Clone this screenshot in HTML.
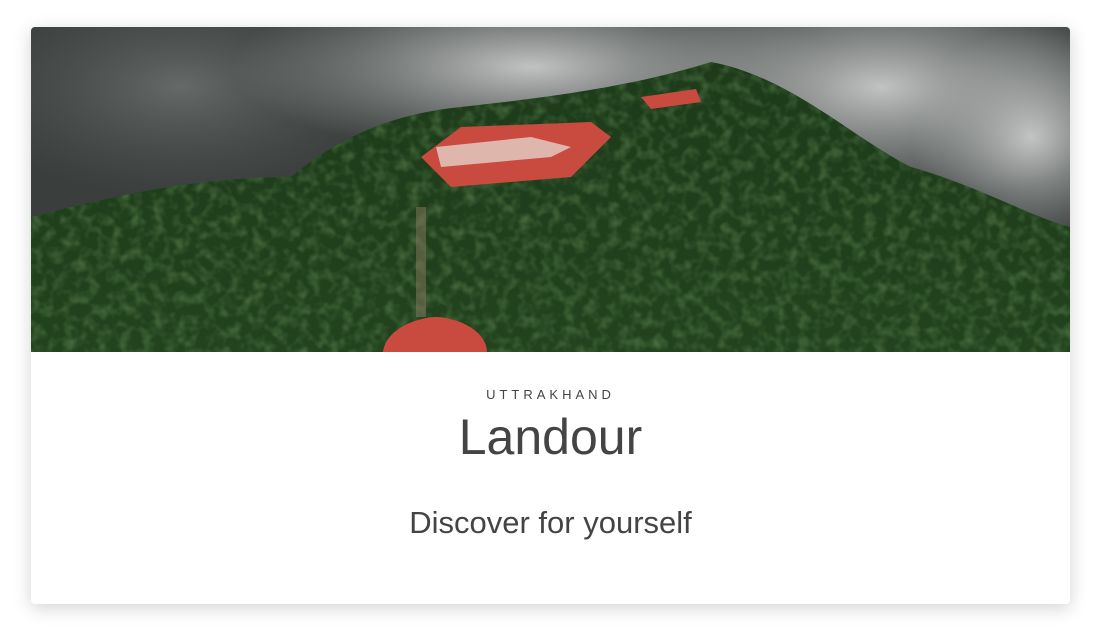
<!DOCTYPE html>
<html><head><style>
body{margin:0;width:1102px;height:635px;background:#fff;overflow:hidden;font-family:"Liberation Sans",sans-serif}
.card{position:absolute;left:31px;top:27px;width:1039px;height:577px;background:#fff;border-radius:4px;box-shadow:0 4px 18px rgba(0,0,0,.18);overflow:hidden}
.img{position:absolute;left:0;top:0;width:1039px;height:325px}
.t{position:absolute;left:0;width:100%;text-align:center;color:#444}
</style></head><body>
<div class="card">
<svg class="img" viewBox="0 0 1039 325" width="1039" height="325">
<defs>
<radialGradient id="m1" cx="0.5" cy="0.5" r="0.5"><stop offset="0" stop-color="#c8cac9" stop-opacity=".95"/><stop offset="1" stop-color="#a9acab" stop-opacity="0"/></radialGradient>
<radialGradient id="m2" cx="0.5" cy="0.5" r="0.5"><stop offset="0" stop-color="#6a6e6c" stop-opacity=".9"/><stop offset="1" stop-color="#555" stop-opacity="0"/></radialGradient>
<linearGradient id="f" x1="0" y1="0" x2="0" y2="1"><stop offset="0" stop-color="#1c3a19"/><stop offset="1" stop-color="#22431e"/></linearGradient>
<filter id="n"><feTurbulence type="fractalNoise" baseFrequency="0.09" numOctaves="2" seed="3"/><feColorMatrix values="0 0 0 0 0.2  0 0 0 0 0.38  0 0 0 0 0.15  0 0 0 1.2 -0.5"/></filter>
<clipPath id="c"><path d="M0 190 C80 170 160 150 260 150 C320 100 380 85 430 80 C520 70 600 60 680 35 C760 50 820 110 880 140 C950 160 1000 190 1039 200 L1039 325 L0 325Z"/></clipPath>
</defs>
<rect width="1039" height="325" fill="#3a3f3d"/>
<ellipse cx="150" cy="60" rx="220" ry="110" fill="url(#m2)"/>
<ellipse cx="500" cy="40" rx="300" ry="90" fill="url(#m1)"/>
<ellipse cx="850" cy="60" rx="260" ry="120" fill="url(#m1)"/>
<ellipse cx="1000" cy="110" rx="120" ry="110" fill="url(#m1)"/>
<g clip-path="url(#c)">
<rect width="1039" height="325" fill="url(#f)"/>
<rect width="1039" height="325" filter="url(#n)" opacity=".7"/>
</g>
<path d="M390 130 L430 100 L560 95 L580 110 L540 150 L420 160Z" fill="#c94a3e"/>
<path d="M405 120 L500 110 L540 120 L520 130 L410 140Z" fill="#e8e4dc" opacity=".7"/>
<path d="M610 70 L665 62 L670 75 L620 82Z" fill="#c94a3e"/>
<path d="M352 325 C355 300 390 290 405 290 C420 290 455 300 456 325Z" fill="#c94a3e"/>
<rect x="385" y="180" width="10" height="110" fill="#8a7a60" opacity=".5"/>
</svg>
<div class="t" style="top:360px;font-size:13px;letter-spacing:4px">UTTRAKHAND</div>
<div class="t" style="top:381px;font-size:50px">Landour</div>
<div class="t" style="top:478px;font-size:31px">Discover for yourself</div>
</div>
</body></html>
